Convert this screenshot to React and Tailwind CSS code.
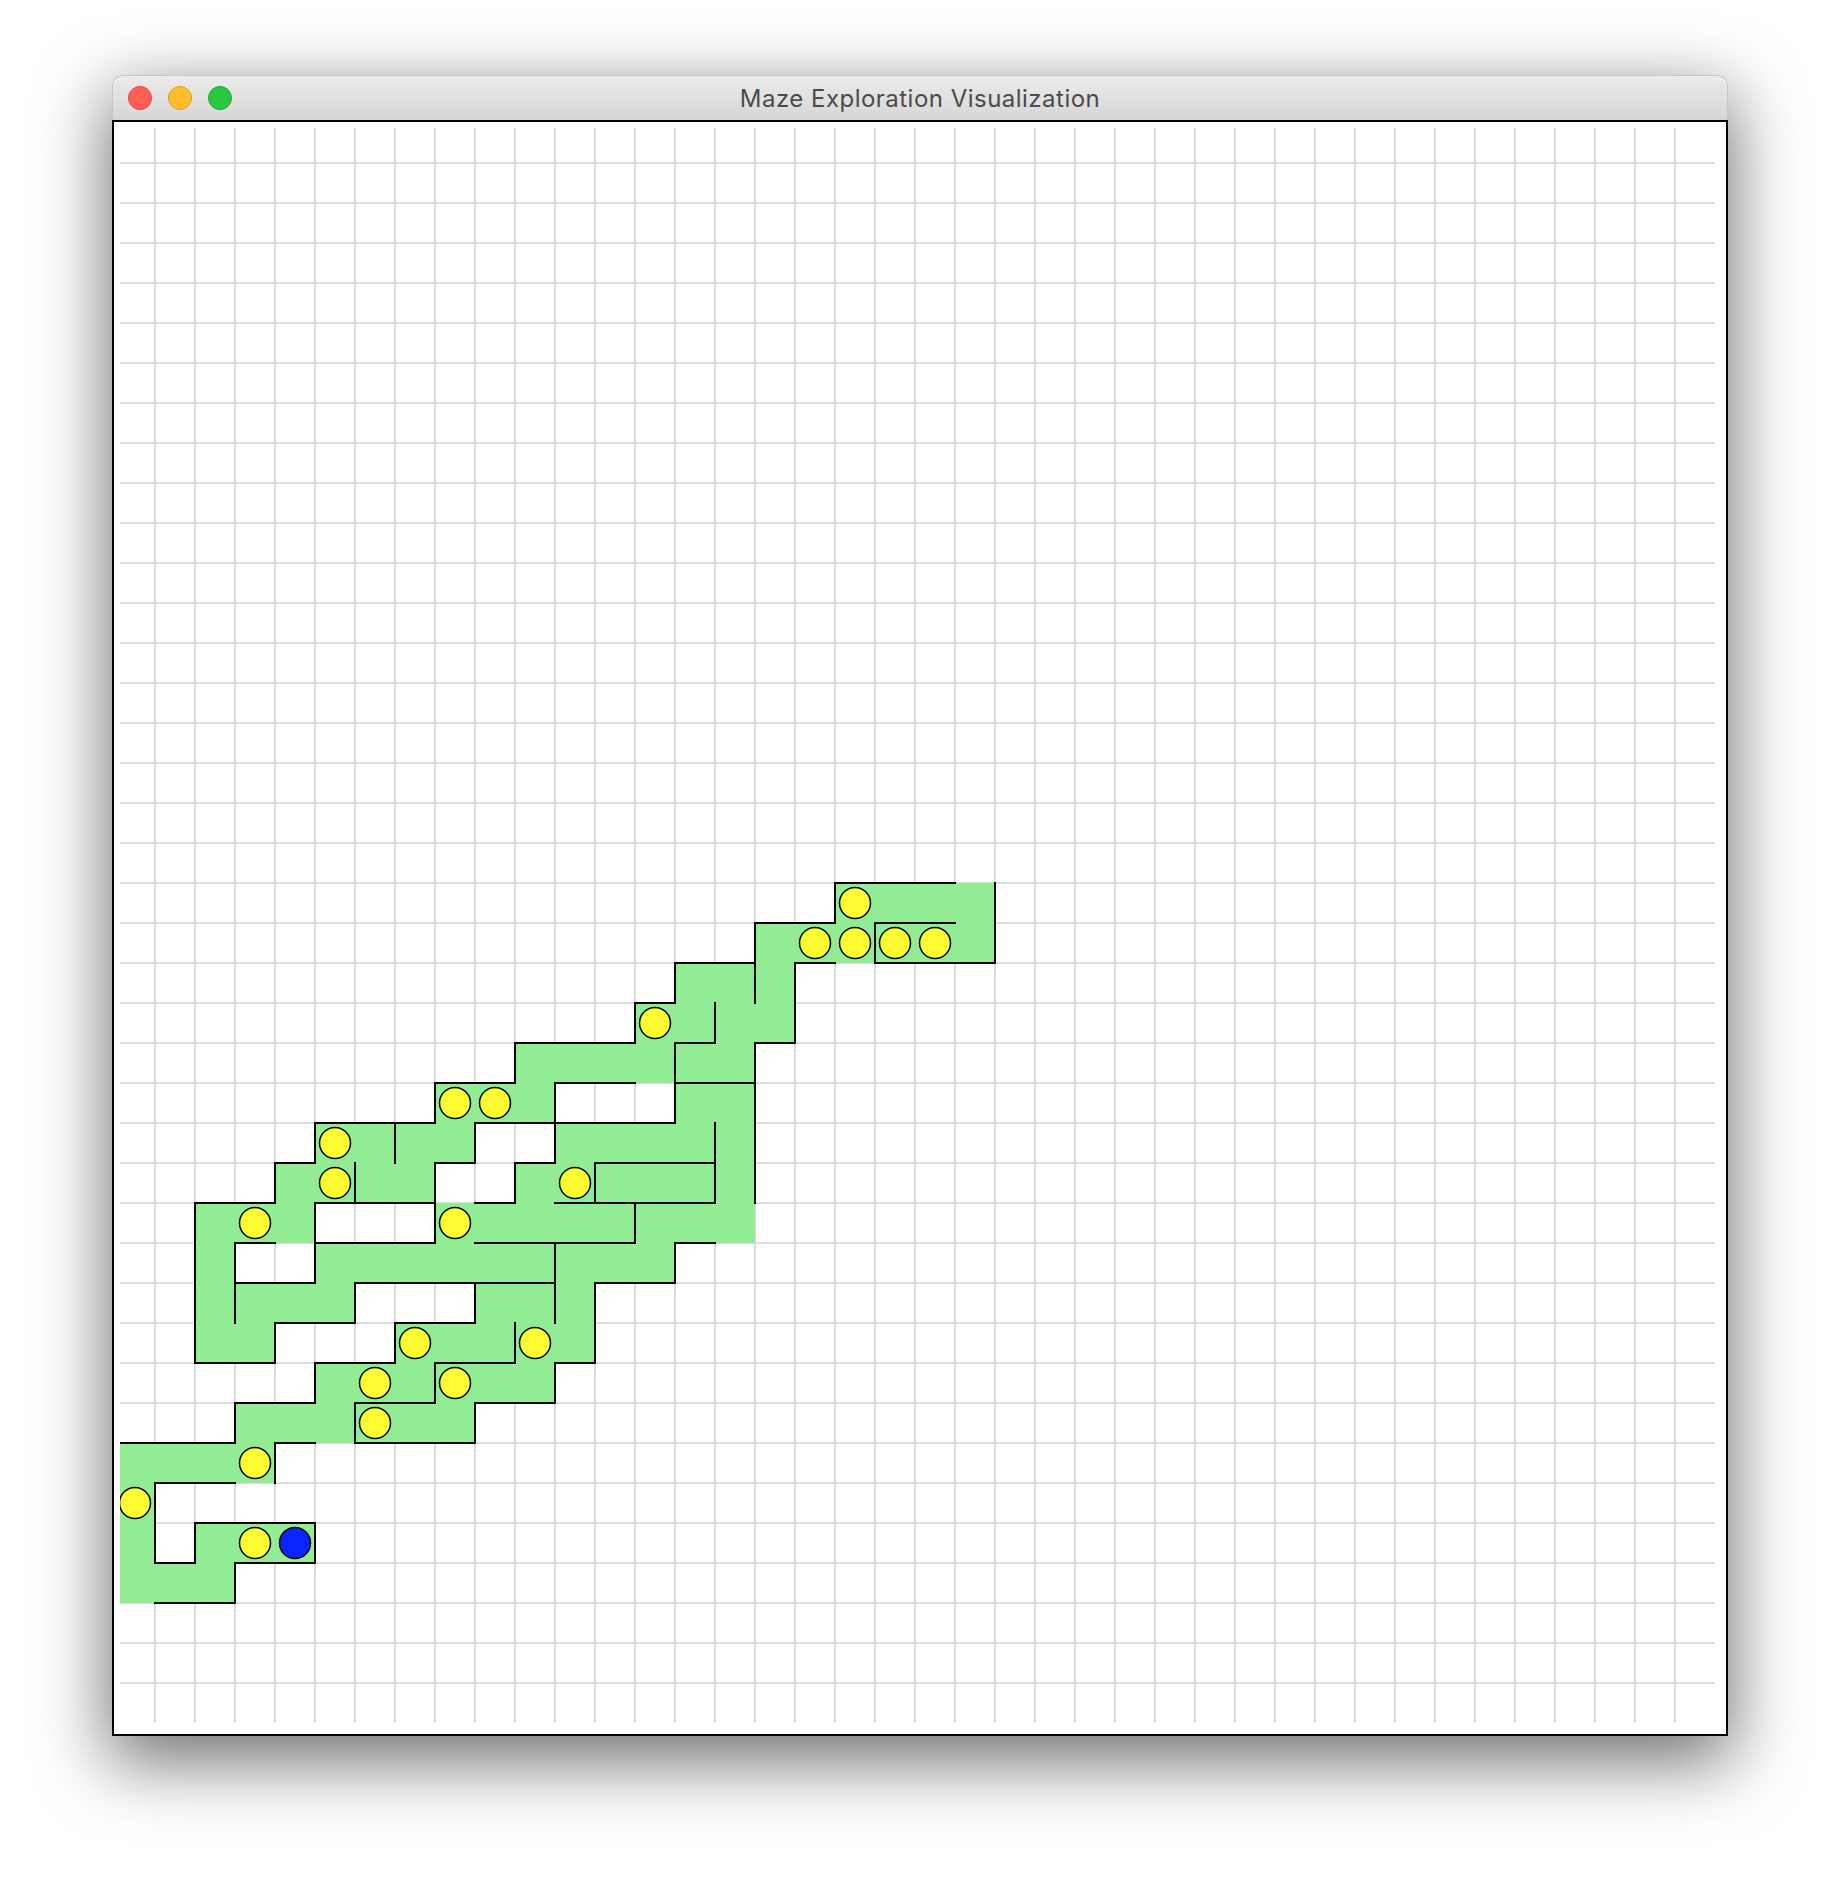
import React from "react";

// grid geometry, in page pixels
const CELL = 40;
const OX = 115;
const OY = 123;
const MIN_X = 120;
const MIN_Y = 128;
const MAX_X = 1715;
const MAX_Y = 1723;

const gx = (i) => OX + i * CELL;
const gy = (j) => OY + j * CELL;

// visited cells: [row, fromCol, toCol]
const visited = [
  [19, 18, 21],
  [20, 16, 21],
  [21, 14, 16],
  [22, 13, 16],
  [23, 10, 15],
  [24, 8, 10], [24, 14, 15],
  [25, 5, 8], [25, 11, 15],
  [26, 4, 7], [26, 10, 15],
  [27, 2, 4], [27, 8, 15],
  [28, 2, 2], [28, 5, 13],
  [29, 2, 5], [29, 9, 11],
  [30, 2, 3], [30, 7, 11],
  [31, 5, 10],
  [32, 3, 8],
  [33, 0, 3],
  [34, 0, 0],
  [35, 0, 0], [35, 2, 4],
  [36, 0, 2],
];

// horizontal walls: [line, fromCol, toCol]
const hWalls = [
  [19, 18, 21],
  [20, 16, 18], [20, 19, 21],
  [21, 14, 16], [21, 17, 18], [21, 19, 22],
  [22, 13, 14],
  [23, 10, 13], [23, 14, 15], [23, 16, 17],
  [24, 8, 10], [24, 11, 13], [24, 14, 16],
  [25, 5, 8], [25, 9, 14],
  [26, 4, 5], [26, 8, 9], [26, 10, 11], [26, 12, 15],
  [27, 2, 4], [27, 5, 8], [27, 9, 10], [27, 11, 15],
  [28, 3, 4], [28, 5, 8], [28, 9, 13], [28, 14, 15],
  [29, 3, 5], [29, 6, 11], [29, 12, 14],
  [30, 4, 6], [30, 7, 9],
  [31, 2, 4], [31, 5, 7], [31, 8, 10], [31, 11, 12],
  [32, 3, 5], [32, 6, 8], [32, 9, 11],
  [33, 0, 3], [33, 4, 5], [33, 6, 9],
  [34, 1, 3],
  [35, 2, 5],
  [36, 1, 2], [36, 3, 5],
  [37, 1, 3],
];

// vertical walls: [line, fromRow, toRow]
const vWalls = [
  [1, 34, 36],
  [2, 27, 31], [2, 35, 36],
  [3, 28, 30], [3, 32, 33], [3, 36, 37],
  [4, 26, 27], [4, 30, 31], [4, 33, 34],
  [5, 25, 26], [5, 27, 29], [5, 31, 32], [5, 35, 36],
  [6, 26, 27], [6, 29, 30], [6, 32, 33],
  [7, 25, 26], [7, 30, 31],
  [8, 24, 25], [8, 26, 28], [8, 31, 32],
  [9, 25, 26], [9, 29, 30], [9, 32, 33],
  [10, 23, 24], [10, 26, 27], [10, 30, 31],
  [11, 24, 26], [11, 28, 30], [11, 31, 32],
  [12, 26, 27], [12, 29, 31],
  [13, 22, 23], [13, 27, 28],
  [14, 21, 22], [14, 23, 25], [14, 28, 29],
  [15, 22, 23], [15, 25, 27],
  [16, 20, 22], [16, 23, 27],
  [17, 21, 23],
  [18, 19, 20],
  [19, 20, 21],
  [22, 19, 21],
];

// cells waiting to be explored: [col, row]
const frontier = [
  [18, 19], [17, 20], [18, 20], [19, 20], [20, 20],
  [13, 22], [8, 24], [9, 24], [5, 25], [5, 26], [11, 26],
  [3, 27], [8, 27], [7, 30], [10, 30], [6, 31], [8, 31],
  [6, 32], [3, 33], [0, 34], [3, 35],
];

const current = [4, 35];

const lines = Array.from({ length: 39 }, (_, k) => k + 1);

const MazeCanvas = () => {
  return (
    <svg
      width="1612"
      height="1612"
      viewBox="114 122 1612 1612"
      className="block"
    >
      <defs>
        <clipPath id="gridClip">
          <rect x={MIN_X} y={MIN_Y} width={MAX_X - MIN_X} height={MAX_Y - MIN_Y} />
        </clipPath>
      </defs>

      {/* light grid */}
      <g stroke="#d3d3d3" strokeWidth="1.6">
        {lines.map((k) => (
          <line key={"h" + k} x1={MIN_X} x2={MAX_X} y1={gy(k)} y2={gy(k)} />
        ))}
        {lines.map((k) => (
          <line key={"v" + k} x1={gx(k)} x2={gx(k)} y1={MIN_Y} y2={MAX_Y} />
        ))}
      </g>

      <g clipPath="url(#gridClip)">
        {/* visited cells */}
        {visited.map(([r, c1, c2]) => (
          <rect
            key={`c${r}-${c1}`}
            x={gx(c1)}
            y={gy(r)}
            width={(c2 - c1 + 1) * CELL}
            height={CELL}
            fill="#92ec94"
          />
        ))}

        {/* walls */}
        <g stroke="#000" strokeWidth="2" strokeLinecap="square">
          {hWalls.map(([j, a, b]) => (
            <line key={`hw${j}-${a}`} x1={gx(a)} x2={gx(b)} y1={gy(j)} y2={gy(j)} />
          ))}
          {vWalls.map(([i, a, b]) => (
            <line key={`vw${i}-${a}`} x1={gx(i)} x2={gx(i)} y1={gy(a)} y2={gy(b)} />
          ))}
        </g>

        {/* frontier markers */}
        {frontier.map(([c, r]) => (
          <circle
            key={`f${c}-${r}`}
            cx={gx(c) + CELL / 2}
            cy={gy(r) + CELL / 2}
            r="15.5"
            fill="#fffb33"
            stroke="#000"
            strokeWidth="1.5"
          />
        ))}

        {/* explorer */}
        <circle
          cx={gx(current[0]) + CELL / 2}
          cy={gy(current[1]) + CELL / 2}
          r="15.5"
          fill="#0a24ff"
          stroke="#000"
          strokeWidth="1.5"
        />
      </g>
    </svg>
  );
};

const App = () => {
  return (
    <div className="w-[1840px] h-[1884px] bg-white pt-[75px] pl-[112px] overflow-hidden">
      <div className="w-[1616px] flex flex-col rounded-t-[10px] shadow-[0_22px_70px_4px_rgba(0,0,0,0.56)]">
        {/* title bar */}
        <div className="h-[45px] grid grid-cols-[1fr_auto_1fr] items-center rounded-t-[10px] border border-b-0 border-[#c6c6c6] bg-gradient-to-b from-[#ececec] to-[#d6d6d6] px-[15px]">
          <div className="flex items-center gap-[16px]">
            <span className="w-[24px] h-[24px] rounded-full bg-[#ff5f57] border border-[#e0443e]" />
            <span className="w-[24px] h-[24px] rounded-full bg-[#febc2e] border border-[#dea123]" />
            <span className="w-[24px] h-[24px] rounded-full bg-[#28c840] border border-[#1aab29]" />
          </div>
          <p className="pt-[2px] text-[24px] leading-none tracking-[0.02em] text-[#4b4b4b] font-['Inter',sans-serif]">
            Maze Exploration Visualization
          </p>
          <div />
        </div>

        {/* drawing area */}
        <div className="h-[1616px] border-2 border-black bg-white">
          <MazeCanvas />
        </div>
      </div>
    </div>
  );
};

export default App;
